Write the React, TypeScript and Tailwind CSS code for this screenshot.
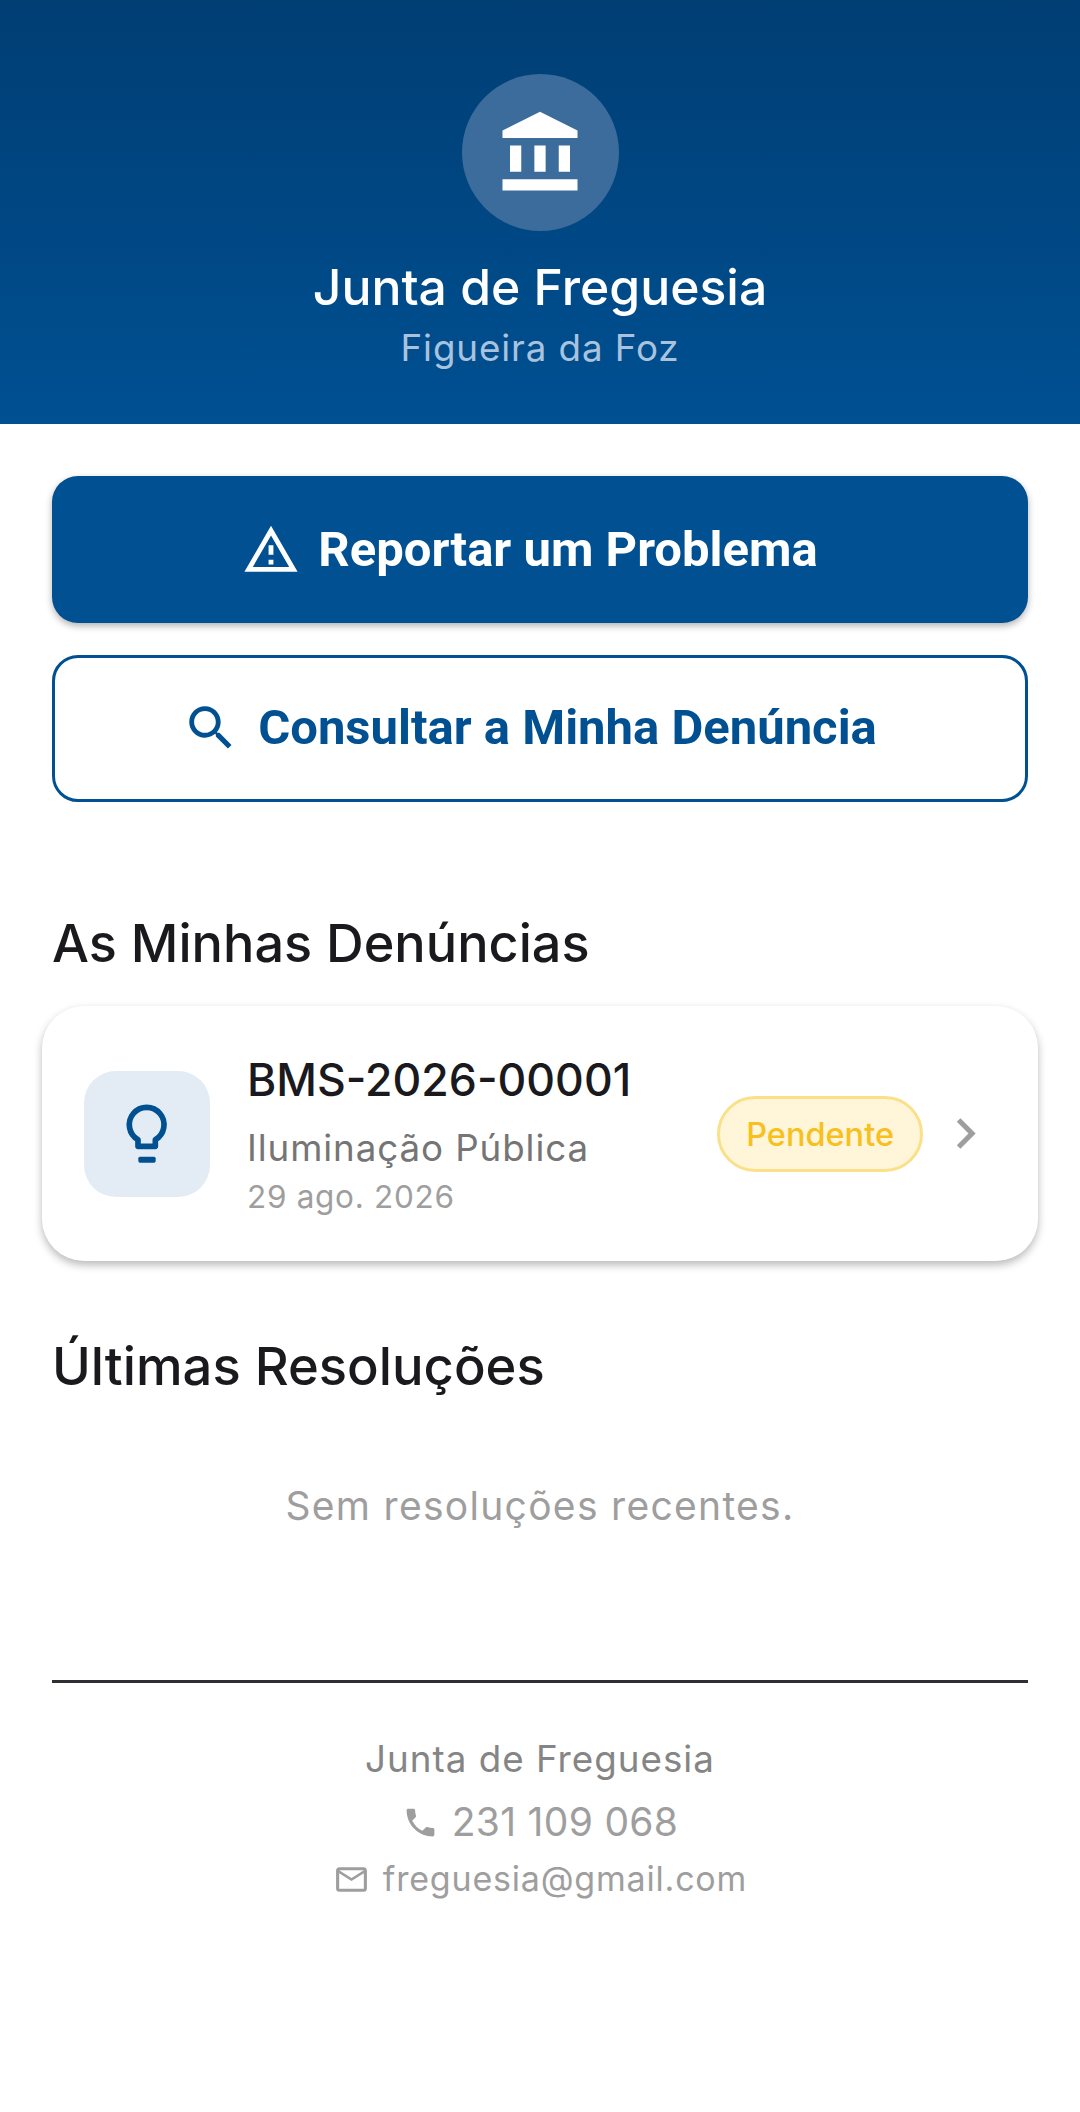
const INTER = 'font-["Inter",sans-serif]';

function Icon({ d, className }: { d: string; className: string }) {
  return (
    <svg viewBox="0 0 24 24" fill="currentColor" className={className}>
      <path d={d} />
    </svg>
  );
}

const icons = {
  bank: 'M4 10h3v7H4zM10.5 10h3v7h-3zM2 19h20v3H2zM17 10h3v7h-3zM12 1L2 6v2h20V6z',
  warning: 'M12 5.99L19.53 19H4.47L12 5.99M12 2L1 21h22L12 2zm1 14h-2v2h2v-2zm0-6h-2v4h2v-4z',
  search: 'M15.5 14h-.79l-.28-.27C15.41 12.59 16 11.11 16 9.5 16 5.91 13.09 3 9.5 3S3 5.91 3 9.5 5.91 16 9.5 16c1.61 0 3.09-.59 4.23-1.57l.27.28v.79l5 4.99L20.49 19l-4.99-5zm-6 0C7.01 14 5 11.99 5 9.5S7.01 5 9.5 5 14 7.01 14 9.5 11.99 14 9.5 14z',
  chevron: 'M10 6L8.59 7.41 13.17 12l-4.58 4.59L10 18l6-6z',
  phone: 'M6.62 10.79c1.44 2.83 3.76 5.14 6.59 6.59l2.2-2.2c.27-.27.67-.36 1.02-.24 1.12.37 2.33.57 3.57.57.55 0 1 .45 1 1V20c0 .55-.45 1-1 1-9.39 0-17-7.61-17-17 0-.55.45-1 1-1h3.5c.55 0 1 .45 1 1 0 1.25.2 2.45.57 3.57.11.35.03.74-.25 1.02l-2.2 2.2z',
  mail: 'M22 6c0-1.1-.9-2-2-2H4c-1.1 0-2 .9-2 2v12c0 1.1.9 2 2 2h16c1.1 0 2-.9 2-2V6zm-2 0l-8 5-8-5h16zm0 12H4V8l8 5 8-5v10z',
};

// Bulb drawn in the tile's own units (378 = full tile)
function BulbTile() {
  return (
    <div className="h-[126px] w-[126px] shrink-0 rounded-[32px] bg-[#e3ecf4] text-[#005092]">
      <svg viewBox="0 0 378 378" className="h-full w-full">
        <path
          d="M162 206 A52 52 0 1 1 214 206 V226 H162 Z"
          fill="none"
          stroke="currentColor"
          strokeWidth="17"
          strokeLinejoin="round"
        />
        <rect x="163" y="257" width="52" height="18" rx="5" fill="currentColor" />
      </svg>
    </div>
  );
}

export default function App() {
  return (
    <div className={`min-h-[2112px] w-[1080px] overflow-hidden bg-white ${INTER}`}>
      {/* Header */}
      <header className="flex h-[424px] flex-col items-center bg-gradient-to-b from-[#003e74] to-[#005092] pt-[74px]">
        <div className="flex h-[157px] w-[157px] items-center justify-center rounded-full bg-[#3b6c9b]">
          <Icon d={icons.bank} className="h-[90px] w-[90px] text-white" />
        </div>
        <h1 className="mt-[27px] text-[49.875px] leading-[58px] font-medium text-white">Junta de Freguesia</h1>
        <p className="mt-[10px] text-[36.75px] leading-[44px] tracking-[0.9px] text-[#a9c3df]">Figueira da Foz</p>
      </header>

      <main className="flex flex-col px-[52px] pt-[52px]">
        {/* Actions */}
        <button className="flex h-[147px] items-center justify-center gap-[18px] rounded-[26px] bg-[#005092] pr-[20px] text-white shadow-[0_3px_7px_rgba(0,0,0,0.3)]">
          <Icon d={icons.warning} className="h-[58px] w-[58px]" />
          <span className='font-["Roboto",sans-serif] text-[49px] font-bold'>Reportar um Problema</span>
        </button>
        <button className="mt-[32px] flex h-[147px] items-center justify-center gap-[18px] rounded-[26px] border-[3px] border-[#005092] pr-[21px] pb-[2px] text-[#005092]">
          <Icon d={icons.search} className="h-[58px] w-[58px]" />
          <span className='font-["Roboto",sans-serif] text-[49px] font-bold'>Consultar a Minha Denúncia</span>
        </button>

        {/* Minhas denuncias */}
        <h2 className="mt-[110px] text-[52.2px] leading-[62px] font-medium text-[#1a1a1e]">As Minhas Denúncias</h2>
        <div className="mx-[-10px] mt-[32px] flex h-[255px] items-center rounded-[42px] bg-white pr-[42px] pl-[42px] shadow-[0_4px_8px_rgba(0,0,0,0.28)]">
          <BulbTile />
          <div className="ml-[37px] flex min-w-0 flex-1 flex-col pt-[2px]">
            <span className="text-[44.6px] leading-[54px] font-medium text-[#1a1a1e]">BMS-2026-00001</span>
            <span className="mt-[18px] text-[36.75px] leading-[46px] tracking-[0.9px] text-[#757575]">Iluminação Pública</span>
            <span className="mt-[7px] text-[31.5px] leading-[38px] tracking-[0.7px] text-[#9e9e9e]">29 ago. 2026</span>
          </div>
          <span className="flex h-[76px] items-center rounded-full border-[3px] border-[#fbe08a] bg-[#fff6d9] px-[26px] pt-[3px] text-[32.5px] font-medium text-[#f8c01e]">Pendente</span>
          <Icon d={icons.chevron} className="ml-[12px] h-[61px] w-[61px] text-[#9e9e9e]" />
        </div>

        {/* Resolucoes */}
        <h2 className="mt-[74px] text-[52.5px] leading-[62px] font-medium text-[#1a1a1e]">Últimas Resoluções</h2>
        <p className="mt-[85px] text-center text-[39px] leading-[48px] tracking-[1.3px] text-[#9e9e9e]">Sem resoluções recentes.</p>

        {/* Footer */}
        <footer className="mt-[150px] flex flex-col items-center border-t-[3px] border-[#2f2f33] pt-[53px]">
          <span className="text-[36.75px] leading-[46px] tracking-[1px] text-[#858585]">Junta de Freguesia</span>
          <span className="mt-[17px] flex items-center gap-[13px] text-[39px] leading-[46px] tracking-[0.3px] text-[#9e9e9e]">
            <Icon d={icons.phone} className="h-[37px] w-[37px]" />
            231 109 068
          </span>
          <span className="mt-[12px] flex items-center gap-[13px] text-[34px] leading-[44px] tracking-[0.8px] text-[#9e9e9e]">
            <Icon d={icons.mail} className="h-[37px] w-[37px]" />
            freguesia@gmail.com
          </span>
        </footer>
      </main>
    </div>
  );
}
